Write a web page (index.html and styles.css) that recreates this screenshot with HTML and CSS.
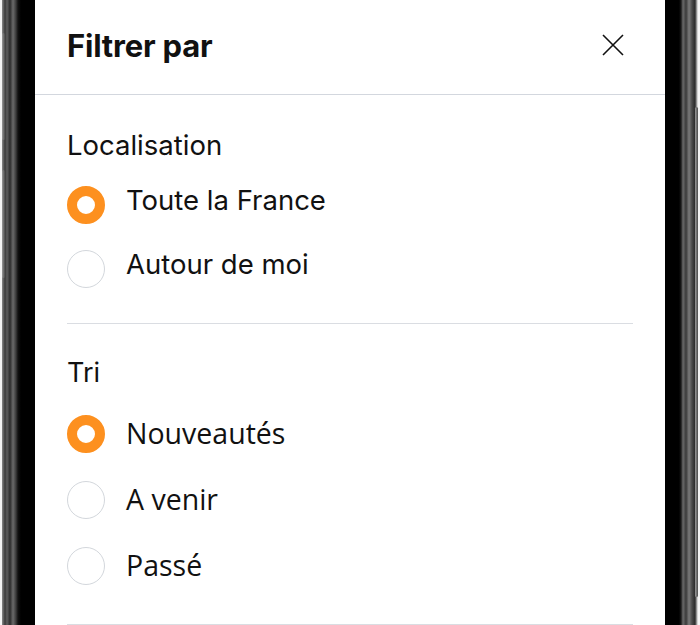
FILE: index.html
```html
<!DOCTYPE html>
<html lang="fr">
<head>
  <meta charset="UTF-8" />
  <meta name="viewport" content="width=device-width, initial-scale=1.0" />
  <title>Filtrer par</title>
  <link rel="stylesheet" href="styles.css">
</head>
<body>
  <div class="phone">
    <div class="bezel bezel-left">
      <span class="side-btn side-btn-1"></span>
      <span class="side-btn side-btn-2"></span>
    </div>

    <div class="screen">
      <div class="sheet-header">
        <h1>Filtrer par</h1>
        <button class="close" aria-label="Fermer">
          <svg width="22" height="22" viewBox="0 0 22 22">
            <path d="M1 1 L21 21 M21 1 L1 21" stroke="#111" stroke-width="1.6" fill="none" />
          </svg>
        </button>
      </div>

      <div class="sheet-body">
        <div class="group">
          <div class="group-title">Localisation</div>
          <label class="option">
            <span class="radio checked"></span>
            <span class="option-label">Toute la France</span>
          </label>
          <label class="option">
            <span class="radio"></span>
            <span class="option-label">Autour de moi</span>
          </label>
        </div>

        <div class="group group-sort">
          <div class="group-title">Tri</div>
          <label class="option">
            <span class="radio checked"></span>
            <span class="option-label">Nouveautés</span>
          </label>
          <label class="option">
            <span class="radio"></span>
            <span class="option-label">A venir</span>
          </label>
          <label class="option">
            <span class="radio"></span>
            <span class="option-label">Passé</span>
          </label>
        </div>
      </div>
    </div>

    <div class="bezel bezel-right">
      <span class="side-btn side-btn-3"></span>
    </div>
  </div>
</body>
</html>
```

FILE: styles.css
```css
body {
  margin: 0;
  background: #fff;
  font-family: "Inter", "Liberation Sans", sans-serif;
  color: #111;
}
.phone {
  display: flex;
  width: 700px;
  height: 625px;
  overflow: hidden;
}
.bezel {
  position: relative;
  height: 100%;
}
.bezel-left {
  width: 35px;
  background: linear-gradient(to right,
    #f4f4f4 0, #f4f4f4 2px,
    #8a8a8a 2px, #3a3a3a 5px,
    #5e5e5e 7px, #2c2c2c 10px,
    #6a6a6a 13px, #3a3a3a 16px,
    #111 18px, #000 21px, #000 35px);
}
.bezel-right {
  width: 35px;
  background: linear-gradient(to right,
    #000 0, #000 14px,
    #1a1a1a 16px, #6a6a6a 18px,
    #3a3a3a 21px, #7a7a7a 24px,
    #4a4a4a 27px, #2a2a2a 30px,
    #f4f4f4 33px, #f4f4f4 35px);
}
.side-btn {
  position: absolute;
  width: 3px;
  background: linear-gradient(to right, #9a9a9a, #4a4a4a);
  border-radius: 2px;
}
.side-btn-1 { left: 2px; top: 33px; height: 107px; }
.side-btn-2 { left: 2px; top: 170px; height: 108px; }
.side-btn-3 { right: 2px; top: 107px; height: 490px; }
.screen {
  width: 630px;
  background: #fff;
}
.sheet-header {
  display: flex;
  align-items: center;
  justify-content: space-between;
  height: 95px;
  padding: 0 41px 0 32px;
  border-bottom: 1px solid #d3d7de;
  box-sizing: border-box;
}
.sheet-header h1 {
  margin: 0;
  font-size: 31px;
  font-weight: 700;
  letter-spacing: -0.2px;
  padding-bottom: 3px;
}
.close {
  background: none;
  border: none;
  padding: 0;
  width: 22px;
  height: 22px;
  cursor: pointer;
  margin-bottom: 5px;
}
.sheet-body {
  padding: 0 32px;
}
.group {
  border-bottom: 1px solid #dadde2;
  padding: 30px 0 22px;
}
.group-sort {
  padding: 29px 0 25px;
}
.group-title {
  font-size: 27.5px;
  line-height: 40px;
  margin-bottom: 8px;
}
.group-sort .group-title {
  font-size: 27px;
}
.option {
  display: flex;
  align-items: center;
  gap: 21px;
  height: 64px;
}
.group-sort .option {
  height: 66px;
}
.radio {
  width: 38px;
  height: 38px;
  border-radius: 50%;
  border: 1.5px solid #d3d7dc;
  box-sizing: border-box;
  flex-shrink: 0;
}
.radio.checked {
  border: 10px solid #fd901f;
}
.option-label {
  font-size: 27.5px;
  line-height: 1;
  margin-top: -8px;
}
.group-sort .option-label {
  font-family: "Open Sans", "Liberation Sans", sans-serif;
  font-size: 28.5px;
  margin-top: -1px;
}
```
